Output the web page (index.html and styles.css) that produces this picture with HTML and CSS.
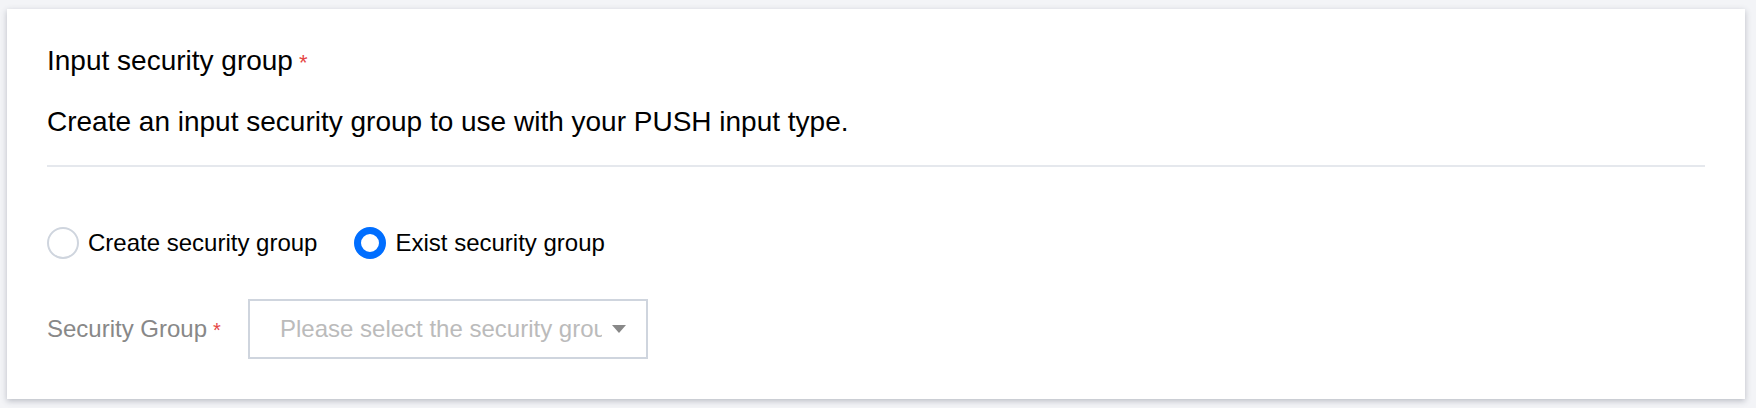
FILE: index.html
```html
<!DOCTYPE html>
<html lang="en">
<head>
<meta charset="utf-8">
<title>Input security group</title>
<link rel="stylesheet" href="styles.css">
</head>
<body>
<div class="card">
  <div class="title">Input security group<span class="req req-title">*</span></div>
  <div class="desc">Create an input security group to use with your PUSH input type.</div>
  <div class="divider"></div>
  <div class="radios">
    <label class="radio"><span class="dot"></span><span class="rtext">Create security group</span></label>
    <label class="radio checked"><span class="dot"></span><span class="rtext">Exist security group</span></label>
  </div>
  <div class="form-row">
    <div class="label">Security Group<span class="req">*</span></div>
    <div class="select">
      <span class="placeholder">Please select the security group</span>
      <svg class="arrow" width="14" height="8" viewBox="0 0 14 8"><path d="M0 0 H14 L7 8 Z" fill="#888"/></svg>
    </div>
  </div>
</div>
</body>
</html>
```
FILE: styles.css
```css
* { box-sizing: border-box; }
html, body { margin: 0; }
body {
  background: #f3f4f7;
  padding: 9px 11px 9px 7px;
  font-family: "Liberation Sans", Arial, sans-serif;
  color: #000;
}
.card {
  background: #fff;
  box-shadow: 0 2px 6px rgba(54, 58, 80, 0.3);
  padding: 32px 40px 40px 40px;
  height: 390px;
}
.title {
  font-size: 28px;
  line-height: 40px;
}
.req {
  color: #e54545;
  font-size: 20px;
  line-height: 0;
  margin-left: 6px;
}
.req-title {
  font-size: 22px;
  margin-left: 6px;
}
.desc {
  font-size: 28px;
  line-height: 40px;
  margin-top: 21px;
}
.divider {
  height: 2px;
  background: #e5e8ed;
  margin-top: 23px;
}
.radios {
  display: flex;
  align-items: center;
  margin-top: 60px;
  height: 32px;
}
.radio {
  display: flex;
  align-items: center;
  margin-right: 37px;
  font-size: 24px;
  line-height: 32px;
  color: #000;
}
.dot {
  width: 32px;
  height: 32px;
  border-radius: 50%;
  border: 2px solid #cfd5de;
  margin-right: 9px;
  flex: none;
}
.radio.checked .dot {
  border: 7px solid #006eff;
}
.form-row {
  display: flex;
  align-items: center;
  margin-top: 40px;
}
.label {
  width: 201px;
  font-size: 24px;
  line-height: 32px;
  color: #888;
  white-space: nowrap;
}
.select {
  width: 400px;
  height: 60px;
  border: 2px solid #cfd5de;
  display: flex;
  align-items: center;
  padding: 0 20px 0 30px;
}
.placeholder {
  flex: 1;
  font-size: 24px;
  color: #bbb;
  white-space: nowrap;
  overflow: hidden;
  margin-right: 10px;
}
.arrow { flex: none; display: block; }
```
